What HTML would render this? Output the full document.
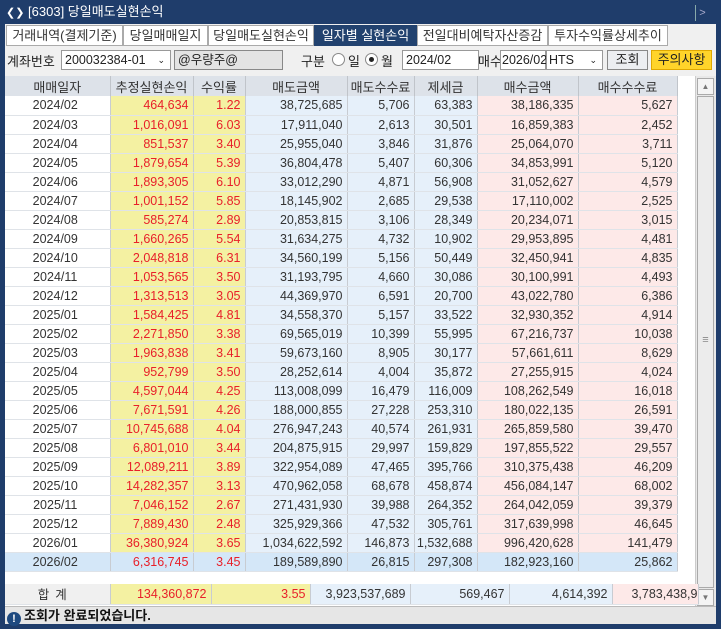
<!DOCTYPE html>
<html><head><meta charset="utf-8"><style>
*{margin:0;padding:0;box-sizing:border-box}
body{width:721px;height:629px;background:#1f3d6b;font-family:"Liberation Sans","Noto Sans CJK KR",sans-serif;font-size:12px;color:#222;position:relative;overflow:hidden}
.a{position:absolute}
#title{left:0;top:0;width:721px;height:24px;color:#fff;font-size:13px;line-height:24px}
#main{left:5px;top:24px;width:711px;height:600px;background:#f0f0f0}
.tab{position:absolute;top:1px;height:21px;border:1px solid #aaa;background:#fff;font-size:13px;line-height:19px;text-align:center;color:#333}
.tab.on{background:#22426f;color:#fff;border-color:#22426f}
.box{position:absolute;height:20px;border:1px solid #999;background:#fff;line-height:18px;padding-left:3px;font-size:12.5px}
table{border-collapse:collapse;table-layout:fixed}
td{height:19px;border-right:1px solid #c8ccd2;border-bottom:1px solid #dfe3e8;text-align:right;padding-right:4px;font-size:12.5px;white-space:nowrap;overflow:hidden;color:#333}
th{height:20px;background:#dde2e9;border-right:1px solid #c0c4ca;font-weight:normal;font-size:13px;color:#333}
td.d{text-align:center;background:#fff}
td.y{background:#f4f1a2;color:#e8202a}
td.b{background:#e6f0fa}
td.p{background:#fde9e8}
tr.sel td{background:#d4e7f8}
tr.sel td.y{background:#d4e7f8}
</style></head><body>
<div id="title" class="a"><span style="margin-left:6px;font-size:11px">❮❯</span> [6303] 당일매도실현손익</div>
<div class="a" style="left:695px;top:5px;width:14px;height:16px;border-left:1px solid #8aa;color:#aac;font-size:11px;line-height:16px;text-align:center">&gt;</div>
<div id="main" class="a">
 <div class="tab" style="left:1px;width:117px">거래내역(결제기준)</div>
 <div class="tab" style="left:118px;width:85px">당일매매일지</div>
 <div class="tab" style="left:203px;width:106px">당일매도실현손익</div>
 <div class="tab on" style="left:309px;width:103px">일자별 실현손익</div>
 <div class="tab" style="left:412px;width:131px">전일대비예탁자산증감</div>
 <div class="tab" style="left:543px;width:120px">투자수익률상세추이</div>

 <div class="a" style="left:2px;top:27px;font-size:13px">계좌번호</div>
 <div class="box" style="left:56px;top:26px;width:110px">200032384-01<span style="position:absolute;right:5px;font-size:9px">⌄</span></div>
 <div class="box" style="left:169px;top:26px;width:109px;background:#e3e3e3;border-color:#888">@우량주@</div>
 <div class="a" style="left:296px;top:27px;font-size:13px">구분</div>
 <div class="a" style="left:327px;top:29px;width:13px;height:13px;border:1px solid #888;border-radius:50%;background:#fff"></div>
 <div class="a" style="left:343px;top:27px;font-size:13px">일</div>
 <div class="a" style="left:360px;top:29px;width:13px;height:13px;border:1px solid #888;border-radius:50%;background:#fff"><div style="margin:3px;width:5px;height:5px;border-radius:50%;background:#222"></div></div>
 <div class="a" style="left:376px;top:27px;font-size:13px">월</div>
 <div class="box" style="left:397px;top:26px;width:77px">2024/02</div>
 <div class="a" style="left:473px;top:27px;font-size:13px">매수</div>
 <div class="box" style="left:495px;top:26px;width:46px;padding-left:1px">2026/02</div>
 <div class="box" style="left:541px;top:26px;width:57px;padding-left:2px">HTS<span style="position:absolute;right:5px;font-size:9px">⌄</span></div>
 <div class="box" style="left:602px;top:26px;width:41px;background:#eceef1;border-color:#888;text-align:center;padding:0;font-size:13px">조회</div>
 <div class="box" style="left:646px;top:26px;width:61px;background:#ffd42a;border-color:#e0a800;text-align:center;padding:0;font-size:13px">주의사항</div>

 <div class="a" style="left:0;top:52px;width:690px;height:530px;background:#fff"></div>
 <table class="a" style="left:0;top:52px">
 <colgroup><col style="width:105px"><col style="width:83px"><col style="width:52px"><col style="width:102px"><col style="width:67px"><col style="width:63px"><col style="width:101px"><col style="width:99px"></colgroup>
 <tr><th>매매일자</th><th>추정실현손익</th><th>수익률</th><th>매도금액</th><th>매도수수료</th><th>제세금</th><th>매수금액</th><th>매수수수료</th></tr>
 <tr><td class="d">2024/02</td><td class="y">464,634</td><td class="y">1.22</td><td class="b">38,725,685</td><td class="b">5,706</td><td class="b">63,383</td><td class="p">38,186,335</td><td class="p">5,627</td></tr>
 <tr><td class="d">2024/03</td><td class="y">1,016,091</td><td class="y">6.03</td><td class="b">17,911,040</td><td class="b">2,613</td><td class="b">30,501</td><td class="p">16,859,383</td><td class="p">2,452</td></tr>
 <tr><td class="d">2024/04</td><td class="y">851,537</td><td class="y">3.40</td><td class="b">25,955,040</td><td class="b">3,846</td><td class="b">31,876</td><td class="p">25,064,070</td><td class="p">3,711</td></tr>
 <tr><td class="d">2024/05</td><td class="y">1,879,654</td><td class="y">5.39</td><td class="b">36,804,478</td><td class="b">5,407</td><td class="b">60,306</td><td class="p">34,853,991</td><td class="p">5,120</td></tr>
 <tr><td class="d">2024/06</td><td class="y">1,893,305</td><td class="y">6.10</td><td class="b">33,012,290</td><td class="b">4,871</td><td class="b">56,908</td><td class="p">31,052,627</td><td class="p">4,579</td></tr>
 <tr><td class="d">2024/07</td><td class="y">1,001,152</td><td class="y">5.85</td><td class="b">18,145,902</td><td class="b">2,685</td><td class="b">29,538</td><td class="p">17,110,002</td><td class="p">2,525</td></tr>
 <tr><td class="d">2024/08</td><td class="y">585,274</td><td class="y">2.89</td><td class="b">20,853,815</td><td class="b">3,106</td><td class="b">28,349</td><td class="p">20,234,071</td><td class="p">3,015</td></tr>
 <tr><td class="d">2024/09</td><td class="y">1,660,265</td><td class="y">5.54</td><td class="b">31,634,275</td><td class="b">4,732</td><td class="b">10,902</td><td class="p">29,953,895</td><td class="p">4,481</td></tr>
 <tr><td class="d">2024/10</td><td class="y">2,048,818</td><td class="y">6.31</td><td class="b">34,560,199</td><td class="b">5,156</td><td class="b">50,449</td><td class="p">32,450,941</td><td class="p">4,835</td></tr>
 <tr><td class="d">2024/11</td><td class="y">1,053,565</td><td class="y">3.50</td><td class="b">31,193,795</td><td class="b">4,660</td><td class="b">30,086</td><td class="p">30,100,991</td><td class="p">4,493</td></tr>
 <tr><td class="d">2024/12</td><td class="y">1,313,513</td><td class="y">3.05</td><td class="b">44,369,970</td><td class="b">6,591</td><td class="b">20,700</td><td class="p">43,022,780</td><td class="p">6,386</td></tr>
 <tr><td class="d">2025/01</td><td class="y">1,584,425</td><td class="y">4.81</td><td class="b">34,558,370</td><td class="b">5,157</td><td class="b">33,522</td><td class="p">32,930,352</td><td class="p">4,914</td></tr>
 <tr><td class="d">2025/02</td><td class="y">2,271,850</td><td class="y">3.38</td><td class="b">69,565,019</td><td class="b">10,399</td><td class="b">55,995</td><td class="p">67,216,737</td><td class="p">10,038</td></tr>
 <tr><td class="d">2025/03</td><td class="y">1,963,838</td><td class="y">3.41</td><td class="b">59,673,160</td><td class="b">8,905</td><td class="b">30,177</td><td class="p">57,661,611</td><td class="p">8,629</td></tr>
 <tr><td class="d">2025/04</td><td class="y">952,799</td><td class="y">3.50</td><td class="b">28,252,614</td><td class="b">4,004</td><td class="b">35,872</td><td class="p">27,255,915</td><td class="p">4,024</td></tr>
 <tr><td class="d">2025/05</td><td class="y">4,597,044</td><td class="y">4.25</td><td class="b">113,008,099</td><td class="b">16,479</td><td class="b">116,009</td><td class="p">108,262,549</td><td class="p">16,018</td></tr>
 <tr><td class="d">2025/06</td><td class="y">7,671,591</td><td class="y">4.26</td><td class="b">188,000,855</td><td class="b">27,228</td><td class="b">253,310</td><td class="p">180,022,135</td><td class="p">26,591</td></tr>
 <tr><td class="d">2025/07</td><td class="y">10,745,688</td><td class="y">4.04</td><td class="b">276,947,243</td><td class="b">40,574</td><td class="b">261,931</td><td class="p">265,859,580</td><td class="p">39,470</td></tr>
 <tr><td class="d">2025/08</td><td class="y">6,801,010</td><td class="y">3.44</td><td class="b">204,875,915</td><td class="b">29,997</td><td class="b">159,829</td><td class="p">197,855,522</td><td class="p">29,557</td></tr>
 <tr><td class="d">2025/09</td><td class="y">12,089,211</td><td class="y">3.89</td><td class="b">322,954,089</td><td class="b">47,465</td><td class="b">395,766</td><td class="p">310,375,438</td><td class="p">46,209</td></tr>
 <tr><td class="d">2025/10</td><td class="y">14,282,357</td><td class="y">3.13</td><td class="b">470,962,058</td><td class="b">68,678</td><td class="b">458,874</td><td class="p">456,084,147</td><td class="p">68,002</td></tr>
 <tr><td class="d">2025/11</td><td class="y">7,046,152</td><td class="y">2.67</td><td class="b">271,431,930</td><td class="b">39,988</td><td class="b">264,352</td><td class="p">264,042,059</td><td class="p">39,379</td></tr>
 <tr><td class="d">2025/12</td><td class="y">7,889,430</td><td class="y">2.48</td><td class="b">325,929,366</td><td class="b">47,532</td><td class="b">305,761</td><td class="p">317,639,998</td><td class="p">46,645</td></tr>
 <tr><td class="d">2026/01</td><td class="y">36,380,924</td><td class="y">3.65</td><td class="b">1,034,622,592</td><td class="b">146,873</td><td class="b">1,532,688</td><td class="p">996,420,628</td><td class="p">141,479</td></tr>
 <tr class="sel"><td class="d">2026/02</td><td class="y">6,316,745</td><td class="y">3.45</td><td class="b">189,589,890</td><td class="b">26,815</td><td class="b">297,308</td><td class="p">182,923,160</td><td class="p">25,862</td></tr>
 </table>
 <!-- scrollbar -->
 <div class="a" style="left:690px;top:52px;width:21px;height:530px;background:#e8e8e8;border-left:1px solid #ccc"></div>
 <div class="a" style="left:692px;top:54px;width:17px;height:17px;border:1px solid #aaa;background:#f4f4f4;font-size:8px;text-align:center;line-height:15px;color:#777">▲</div>
 <div class="a" style="left:692px;top:72px;width:17px;height:492px;border:1px solid #aaa;background:#ececec;text-align:center;line-height:486px;color:#888;font-size:11px">≡</div>
 <div class="a" style="left:692px;top:565px;width:17px;height:17px;border:1px solid #aaa;background:#f4f4f4;font-size:8px;text-align:center;line-height:15px;color:#777">▼</div>
 <!-- total -->
 <table class="a" style="left:0;top:560px">
 <colgroup><col style="width:105px"><col style="width:101px"><col style="width:99px"><col style="width:100px"><col style="width:99px"><col style="width:103px"><col style="width:86px"></colgroup>
 <tr><td class="d" style="background:#f0f0f0;height:20px;letter-spacing:6px">합계</td><td class="y" style="height:20px">134,360,872</td><td class="y">3.55</td><td class="b">3,923,537,689</td><td class="b">569,467</td><td class="b">4,614,392</td><td class="p" style="padding-right:0">3,783,438,9</td></tr>
 </table>
 <!-- status -->
 <div class="a" style="left:0;top:582px;width:711px;height:18px;background:#e6e6e6;border-top:1px solid #bbb;font-size:13px;font-weight:bold;line-height:17px;color:#111">
  <span style="display:inline-block;width:14px;height:14px;border-radius:50%;background:#1f4a80;color:#fff;text-align:center;font-size:11px;line-height:14px;margin:0 3px 0 2px;vertical-align:-2px">!</span>조회가 완료되었습니다.
 </div>
</div>
</body></html>
